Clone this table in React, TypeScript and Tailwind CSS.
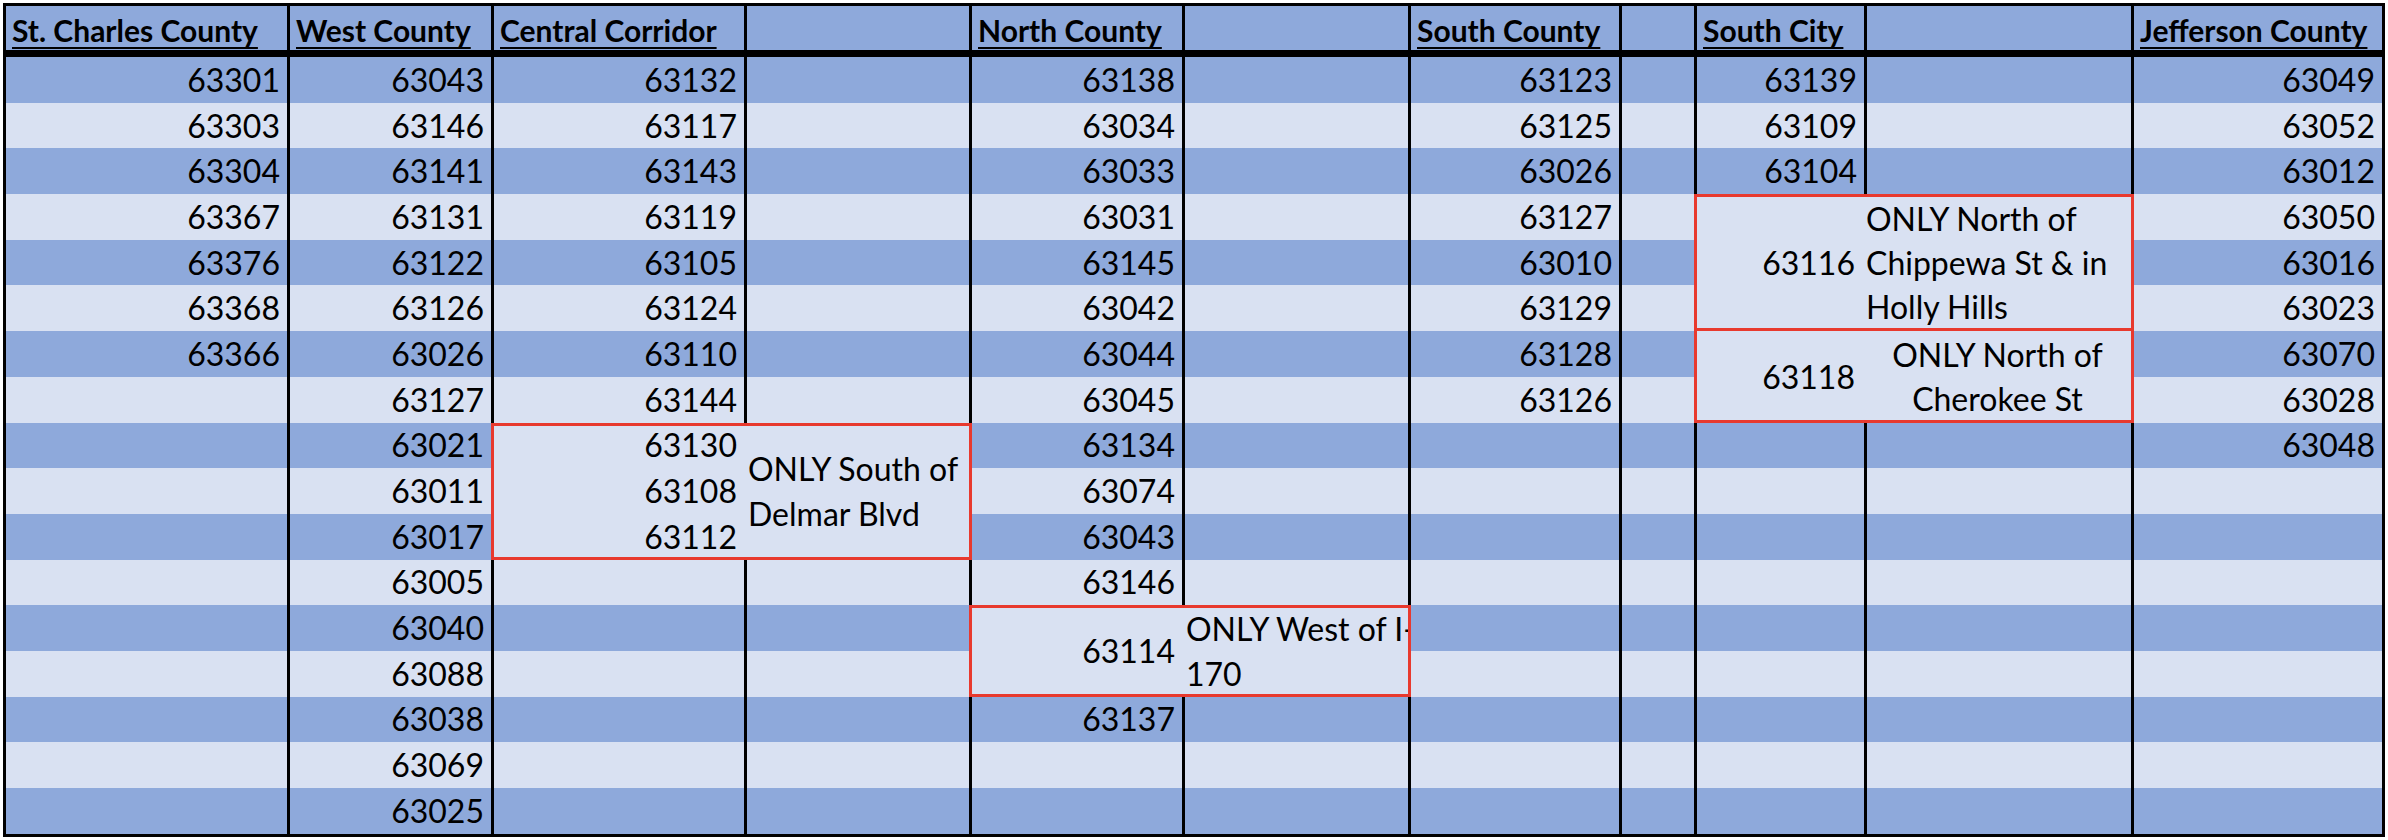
import React from "react";

const headers = [
  "St. Charles County",
  "West County",
  "Central Corridor",
  "",
  "North County",
  "",
  "South County",
  "",
  "South City",
  "",
  "Jefferson County",
];

// zip codes per column, one entry per row (17 rows)
const columns: string[][] = [
  ["63301", "63303", "63304", "63367", "63376", "63368", "63366"],
  ["63043", "63146", "63141", "63131", "63122", "63126", "63026", "63127", "63021", "63011", "63017", "63005", "63040", "63088", "63038", "63069", "63025"],
  ["63132", "63117", "63143", "63119", "63105", "63124", "63110", "63144"],
  [],
  ["63138", "63034", "63033", "63031", "63145", "63042", "63044", "63045", "63134", "63074", "63043", "63146", "", "", "63137"],
  [],
  ["63123", "63125", "63026", "63127", "63010", "63129", "63128", "63126"],
  [],
  ["63139", "63109", "63104"],
  [],
  ["63049", "63052", "63012", "63050", "63016", "63023", "63070", "63028", "63048"],
];

const ROWS = 17;

// cells covered by the red note boxes [col, row]
const covered = (c: number, r: number) =>
  ((c === 2 || c === 3) && r >= 8 && r <= 10) ||
  ((c === 4 || c === 5) && (r === 12 || r === 13)) ||
  ((c === 8 || c === 9) && r >= 3 && r <= 7);

const gridCols =
  "grid grid-cols-[281px_204px_253px_225px_213px_226px_211px_75px_170px_267px_251px]";

export default function App() {
  const cells: React.ReactNode[] = [];
  for (let r = 0; r < ROWS; r++) {
    for (let c = 0; c < 11; c++) {
      if (covered(c, r)) continue;
      cells.push(
        <div
          key={`${r}-${c}`}
          className={`flex items-center justify-end pr-[7px] ${c > 0 ? "border-l-[3px] border-black" : ""} ${r % 2 === 0 ? "bg-[#8EA9DB]" : "bg-[#D9E1F2]"}`}
        >
          {columns[c][r] ?? ""}
        </div>
      );
    }
  }

  return (
    <div className="min-h-screen bg-white pt-[3px] pl-[3px] font-['Lato','Noto_Sans',sans-serif] text-[32px] text-black">
      <div className="w-[2382px] border-[3px] border-black">
        {/* header */}
        <div className={`${gridCols} h-[44px] bg-[#8EA9DB]`}>
          {headers.map((h, i) => (
            <div
              key={i}
              className={`flex items-center pl-[6px] pt-[2px] text-[30px] font-bold ${i > 0 ? "border-l-[3px] border-black" : ""}`}
            >
              {h && <span className="underline decoration-2 underline-offset-[5px] whitespace-nowrap">{h}</span>}
            </div>
          ))}
        </div>
        <div className="h-[7px] bg-black" />

        {/* body */}
        <div className={`${gridCols} grid-rows-[repeat(17,45.7px)]`}>
          {cells}

          {/* Central Corridor note */}
          <div className="relative z-10 col-start-3 col-span-2 row-start-9 row-span-3 -mr-[3px] grid grid-cols-[250px_1fr] grid-rows-3 border-x-[3px] border-[#E8392E] bg-[#D9E1F2] shadow-[inset_0_3px_0_#E8392E,inset_0_-3px_0_#E8392E]">
            <div className="flex items-center justify-end pr-[7px]">63130</div>
            <div className="row-span-3 flex items-center pl-[4px] leading-[45px]">
              <span>ONLY South of<br />Delmar Blvd</span>
            </div>
            <div className="flex items-center justify-end pr-[7px]">63108</div>
            <div className="flex items-center justify-end pr-[7px]">63112</div>
          </div>

          {/* North County note */}
          <div className="relative z-10 col-start-5 col-span-2 row-start-13 row-span-2 -mr-[3px] grid grid-cols-[210px_1fr] border-x-[3px] border-[#E8392E] bg-[#D9E1F2] shadow-[inset_0_3px_0_#E8392E,inset_0_-3px_0_#E8392E]">
            <div className="flex items-center justify-end pr-[7px]">63114</div>
            <div className="flex items-center overflow-hidden pl-[4px] leading-[45px] whitespace-nowrap">
              <span>ONLY West of I-<br />170</span>
            </div>
          </div>

          {/* South City notes */}
          <div className="relative z-10 col-start-9 col-span-2 row-start-4 row-span-3 -mr-[3px] grid grid-cols-[167px_1fr] border-x-[3px] border-[#E8392E] bg-[#D9E1F2] shadow-[inset_0_3px_0_#E8392E,inset_0_-3px_0_#E8392E]">
            <div className="flex items-center justify-end pr-[9px]">63116</div>
            <div className="flex items-center pl-[2px] leading-[44px] whitespace-nowrap">
              <span>ONLY North of<br />Chippewa St &amp; in<br />Holly Hills</span>
            </div>
          </div>
          <div className="relative z-10 col-start-9 col-span-2 row-start-7 row-span-2 -mr-[3px] grid grid-cols-[167px_1fr] border-x-[3px] border-[#E8392E] bg-[#D9E1F2] shadow-[inset_0_-3px_0_#E8392E]">
            <div className="flex items-center justify-end pr-[9px]">63118</div>
            <div className="flex items-center justify-center text-center leading-[44px] whitespace-nowrap">
              <span>ONLY North of<br />Cherokee St</span>
            </div>
          </div>
        </div>
      </div>
    </div>
  );
}
